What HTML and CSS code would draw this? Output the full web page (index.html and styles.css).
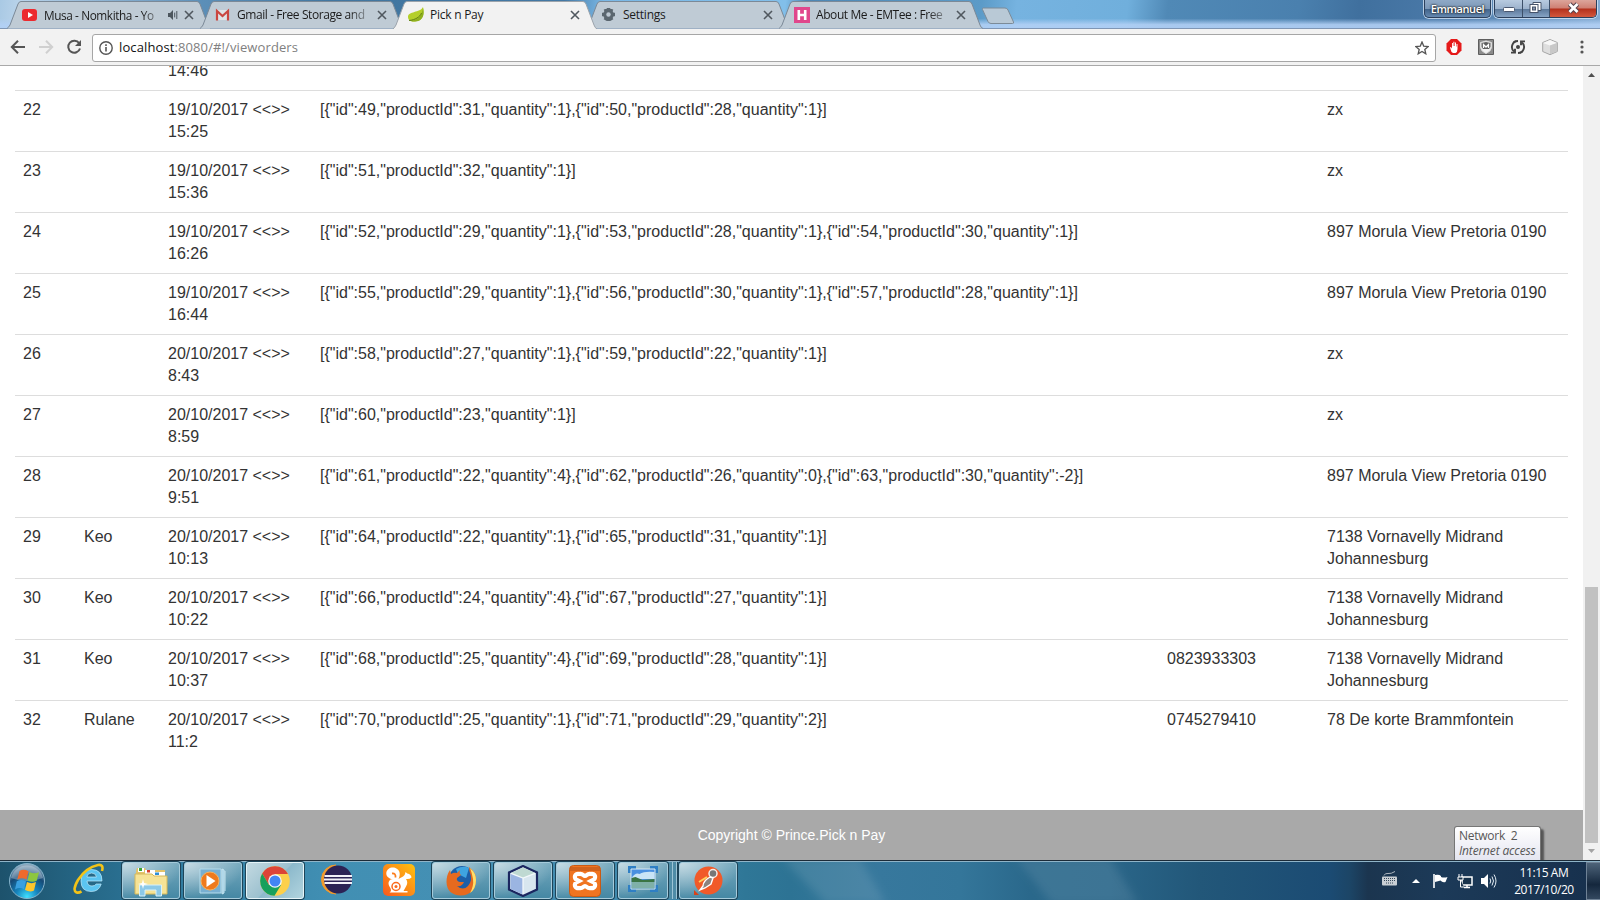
FILE: index.html
```html
<!DOCTYPE html>
<html lang="en">
<head>
<meta charset="utf-8">
<title>Pick n Pay</title>
<link rel="stylesheet" href="styles.css">
</head>
<body>
<div class="screen">
  <header class="strip">
    <div class="tabs">
      <div class="tab">
        <svg class="shape" viewBox="0 0 204 29"><path d="M0 28.5Q2 27 3 25L11 4Q12 1.5 14 1.5H190Q192 1.5 193 4L201 25Q202 28 204 28.5"/></svg>
        <svg class="fav" viewBox="0 0 16 16"><rect x="0" y="2" width="15" height="12" rx="3" fill="#ec2a2f"/><path d="M6 5v6l5-3z" fill="#fff"/></svg>
        <span class="label fade">Musa - Nomkitha - Yo</span>
        <svg class="spk" viewBox="0 0 12 12"><path d="M1 4h2l3-3v10L3 8H1z" fill="#4c565e"/><path d="M7.7 3.6v4.8M9.8 2v8" stroke="#4c565e" fill="none"/></svg>
        <svg class="x" viewBox="0 0 10 10"><path d="M1 1l8 8M9 1L1 9"/></svg>
      </div>
      <div class="tab">
        <svg class="shape" viewBox="0 0 204 29"><path d="M0 28.5Q2 27 3 25L11 4Q12 1.5 14 1.5H190Q192 1.5 193 4L201 25Q202 28 204 28.5"/></svg>
        <svg class="fav" viewBox="0 0 16 16"><path d="M1 3h13v10H1z" fill="#dfe3e6"/><path d="M2 13.500V4l5.500 5L13 4v9.500" fill="none" stroke="#ca4640" stroke-width="2.200"/></svg>
        <span class="label fade tight">Gmail - Free Storage and</span>
        <svg class="x" viewBox="0 0 10 10"><path d="M1 1l8 8M9 1L1 9"/></svg>
      </div>
      <div class="tab active">
        <svg class="shape" viewBox="0 0 204 29"><path d="M0 29Q2 27 3 25L11 4Q12 1.500 14 1.500H190Q192 1.500 193 4L201 25Q202 28 204 29"/></svg>
        <svg class="fav" viewBox="0 0 16 16"><path d="M15 0c1.500 6 .8 14-8 14.500-4 .3-7-1-7-4.500C0 4 12 6 15 0z" fill="#b4cf2a"/><path d="M15 1c1.500 6 .5 13-8 13.500-2.500.2-4-.3-5-1.200C9 14 14 9 15 1z" fill="#8fb01f"/><path d="M1 13.500C7 13 12 10 13.500 6" stroke="#5f7f12" fill="none"/></svg>
        <span class="label">Pick n Pay</span>
        <svg class="x" viewBox="0 0 10 10"><path d="M1 1l8 8M9 1L1 9"/></svg>
      </div>
      <div class="tab">
        <svg class="shape" viewBox="0 0 204 29"><path d="M0 28.5Q2 27 3 25L11 4Q12 1.5 14 1.5H190Q192 1.5 193 4L201 25Q202 28 204 28.5"/></svg>
        <svg class="fav" viewBox="0 0 16 16"><g stroke="#5b6770" stroke-width="3.600"><path d="M7.500 1v13M1 7.500h13M4.200 1.900l6.600 11.200M10.800 1.900L4.200 13.100"/></g><circle cx="7.500" cy="7.500" r="5.300" fill="#5b6770"/><circle cx="7.500" cy="7.500" r="2.200" fill="#bcc8d2"/></svg>
        <span class="label">Settings</span>
        <svg class="x" viewBox="0 0 10 10"><path d="M1 1l8 8M9 1L1 9"/></svg>
      </div>
      <div class="tab">
        <svg class="shape" viewBox="0 0 204 29"><path d="M0 28.5Q2 27 3 25L11 4Q12 1.5 14 1.5H190Q192 1.5 193 4L201 25Q202 28 204 28.5"/></svg>
        <svg class="fav" viewBox="0 0 16 16"><path d="M0 0h16v16H0z" fill="#e0478c"/><path d="M4.800 3v10M11.200 3v10M5 8h6" stroke="#fff" stroke-width="2.600"/></svg>
        <span class="label fade tight">About Me - EMTee : Free</span>
        <svg class="x" viewBox="0 0 10 10"><path d="M1 1l8 8M9 1L1 9"/></svg>
      </div>
      <svg class="newtab" viewBox="0 0 34 18"><path d="M2.500 1H24q2 0 3 2l5.500 12q.5 1.500-1 1.500H10q-2 0-3-2L1.500 2.500Q1 1 2.500 1z" fill="#b9c9d6" stroke="#7c8b98"/></svg>
    </div>
    <div class="winbtns">
      <div class="user">Emmanuel</div>
      <div class="ctl">
        <span class="c min"><svg width="12" height="6" viewBox="0 0 12 6"><rect x=".5" y=".5" width="11" height="4" rx="1" fill="#fff" stroke="#4a5870"/></svg></span>
        <span class="c max"><svg width="13" height="13" viewBox="0 0 13 13"><path d="M4 1.500h8v8H4z" fill="#fff" stroke="#46546b"/><rect x="1" y="3.500" width="8" height="8" fill="#fff" stroke="#46546b"/><rect x="3.500" y="6" width="3" height="3" fill="#8796ae" stroke="#46546b"/></svg></span>
        <span class="c close"><svg width="13" height="12" viewBox="0 0 13 12"><path d="M2.500 2l8 8M10.500 2l-8 8" stroke="#54424c" stroke-width="4.600"/><path d="M2.500 2l8 8M10.500 2l-8 8" stroke="#fff" stroke-width="2.700"/></svg></span>
      </div>
    </div>
  </header>

  <div class="toolbar">
    <svg class="nav" viewBox="0 0 16 16"><path d="M15 8H2M8 1.700L1.800 8 8 14.300" stroke="#555"/></svg>
    <svg class="nav" viewBox="0 0 16 16"><path d="M1 8h13M8 1.700L14.200 8 8 14.300" stroke="#d0d0d0"/></svg>
    <svg class="nav" viewBox="0 0 16 16"><path d="M13.200 4.300A6 6 0 1 0 14 9.500" stroke="#555"/><path d="M15 1v6H9z" fill="#555"/></svg>
    <div class="omni">
      <svg width="14" height="14" viewBox="0 0 14 14"><circle cx="7" cy="7" r="6.200" fill="none" stroke="#555" stroke-width="1.400"/><path d="M7 6v4.500M7 3.300v1.600" stroke="#555" stroke-width="1.600"/></svg>
      <span class="url">localhost<span class="path">:8080/#!/vieworders</span></span>
      <svg class="star" width="14" height="14" viewBox="0 0 14 14"><path d="M7 1l1.700 4.100 4.500.4-3.400 2.900 1 4.400L7 10.500l-3.800 2.300 1-4.400L.8 5.500l4.500-.4z" fill="none" stroke="#555" stroke-width="1.300"/></svg>
    </div>
    <div class="exts">
      <svg width="16" height="16" viewBox="0 0 16 16"><path d="M5 0h6l4.500 4.500v7L11 16H5L.5 11.500v-7z" fill="#e51a1a"/><path d="M5.500 13L4 8.500l.9-.5 1.100 1.400V4h.9v3h.5V2.700h1V7H9V3.500h1v4h.5V5h1v5q0 3-2 4H7z" fill="#fff"/></svg>
      <svg width="16" height="16" viewBox="0 0 16 16"><path d="M.5.500h15v15H.5z" fill="#8b8b8b" stroke="#5e5e5e"/><path d="M8 2l5.500 1.500V8q0 4-5.500 6.500Q2.500 12 2.500 8V3.500z" fill="#f2f2f2" stroke="#ddd"/><path d="M3.500 4L8 3l4.500 1v4l-1.500 2H5L3.500 8z" fill="#5f5f5f"/><path d="M5.500 9V5.500L8 8l2.500-2.500V9" fill="none" stroke="#fff" stroke-width="1.300"/></svg>
      <svg width="16" height="16" viewBox="0 0 16 16"><g fill="none" stroke="#444" stroke-width="1.900"><path d="M8 2A6 6 0 0 0 4 12.500M8 14A6 6 0 0 0 12 3.500"/><path d="M1 13.600h4V9.800M15 2.400h-4v3.800M3.500 3.500l2.500-1.500M12.500 12.500L10 14"/></g><circle cx="8" cy="8" r="2" fill="#444"/></svg>
      <svg width="16" height="16" viewBox="0 0 16 16"><path d="M8 .5l7.300 3v9L8 15.700.7 12.500v-9z" fill="#dedede" stroke="#a6a6a6"/><path d="M1 4l7 2.500L15 4 8 1z" fill="#f7f7f7"/><path d="M8 6.500v8.700l7-3V4z" fill="#c8c8c8"/></svg>
      <svg width="16" height="16" viewBox="0 0 16 16"><g fill="#555"><circle cx="8" cy="3" r="1.600"/><circle cx="8" cy="8" r="1.600"/><circle cx="8" cy="13" r="1.600"/></g></svg>
    </div>
  </div>

  <main class="view">
    <div class="page">
      <div class="tablewrap">
        <table class="orders">
          <colgroup><col class="c1"><col class="c2"><col class="c3"><col class="c4"><col class="c5"><col class="c6"></colgroup>
          <tbody>
            <tr class="cut"><td></td><td></td><td><div class="lift">14:46</div></td><td></td><td></td><td></td></tr>
            <tr><td>22</td><td></td><td>19/10/2017 &lt;&lt;&gt;&gt;<br>15:25</td><td>[{"id":49,"productId":31,"quantity":1},{"id":50,"productId":28,"quantity":1}]</td><td></td><td>zx</td></tr>
            <tr><td>23</td><td></td><td>19/10/2017 &lt;&lt;&gt;&gt;<br>15:36</td><td>[{"id":51,"productId":32,"quantity":1}]</td><td></td><td>zx</td></tr>
            <tr><td>24</td><td></td><td>19/10/2017 &lt;&lt;&gt;&gt;<br>16:26</td><td>[{"id":52,"productId":29,"quantity":1},{"id":53,"productId":28,"quantity":1},{"id":54,"productId":30,"quantity":1}]</td><td></td><td>897 Morula View Pretoria 0190</td></tr>
            <tr><td>25</td><td></td><td>19/10/2017 &lt;&lt;&gt;&gt;<br>16:44</td><td>[{"id":55,"productId":29,"quantity":1},{"id":56,"productId":30,"quantity":1},{"id":57,"productId":28,"quantity":1}]</td><td></td><td>897 Morula View Pretoria 0190</td></tr>
            <tr><td>26</td><td></td><td>20/10/2017 &lt;&lt;&gt;&gt;<br>8:43</td><td>[{"id":58,"productId":27,"quantity":1},{"id":59,"productId":22,"quantity":1}]</td><td></td><td>zx</td></tr>
            <tr><td>27</td><td></td><td>20/10/2017 &lt;&lt;&gt;&gt;<br>8:59</td><td>[{"id":60,"productId":23,"quantity":1}]</td><td></td><td>zx</td></tr>
            <tr><td>28</td><td></td><td>20/10/2017 &lt;&lt;&gt;&gt;<br>9:51</td><td>[{"id":61,"productId":22,"quantity":4},{"id":62,"productId":26,"quantity":0},{"id":63,"productId":30,"quantity":-2}]</td><td></td><td>897 Morula View Pretoria 0190</td></tr>
            <tr><td>29</td><td>Keo</td><td>20/10/2017 &lt;&lt;&gt;&gt;<br>10:13</td><td>[{"id":64,"productId":22,"quantity":1},{"id":65,"productId":31,"quantity":1}]</td><td></td><td>7138 Vornavelly Midrand<br>Johannesburg</td></tr>
            <tr><td>30</td><td>Keo</td><td>20/10/2017 &lt;&lt;&gt;&gt;<br>10:22</td><td>[{"id":66,"productId":24,"quantity":4},{"id":67,"productId":27,"quantity":1}]</td><td></td><td>7138 Vornavelly Midrand<br>Johannesburg</td></tr>
            <tr><td>31</td><td>Keo</td><td>20/10/2017 &lt;&lt;&gt;&gt;<br>10:37</td><td>[{"id":68,"productId":25,"quantity":4},{"id":69,"productId":28,"quantity":1}]</td><td>0823933303</td><td>7138 Vornavelly Midrand<br>Johannesburg</td></tr>
            <tr><td>32</td><td>Rulane</td><td>20/10/2017 &lt;&lt;&gt;&gt;<br>11:2</td><td>[{"id":70,"productId":25,"quantity":1},{"id":71,"productId":29,"quantity":2}]</td><td>0745279410</td><td>78 De korte Brammfontein</td></tr>
          </tbody>
        </table>
      </div>
      <footer class="foot">Copyright © Prince.Pick n Pay</footer>
    </div>
    <div class="scroll">
      <svg width="17" height="17" viewBox="0 0 17 17"><path d="M5 11h7L8.500 7z" fill="#505050"/></svg>
      <div class="thumb"></div>
      <svg width="17" height="17" viewBox="0 0 17 17"><path d="M5 6h7l-3.500 4z" fill="#a3a3a3"/></svg>
    </div>
  </main>

  <div class="tip"><div>Network&nbsp; 2</div><div class="it">Internet access</div></div>

  <footer class="taskbar">
    <svg class="gloss" viewBox="0 0 1600 38" preserveAspectRatio="none"><defs><filter id="soft"><feGaussianBlur stdDeviation="4"/></filter></defs><g filter="url(#soft)" fill="#fff"><path d="M782 -4h78l26 46h-60z" opacity=".1"/><path d="M1016 -4h94l28 46h-86z" opacity=".09"/></g></svg>
    <div class="apps">
      <div class="start"><svg width="40" height="38" viewBox="0 0 40 38"><defs><radialGradient id="orb" cx=".5" cy=".95" r=".9"><stop offset="0" stop-color="#3fe0ff"/><stop offset=".35" stop-color="#1684bd"/><stop offset=".7" stop-color="#164a76"/><stop offset="1" stop-color="#8ba7bd"/></radialGradient></defs><circle cx="19" cy="19" r="17.500" fill="url(#orb)" stroke="#86b4cc"/><path d="M3 16a16.500 16.500 0 0 1 32 0Q19 22 3 16z" fill="#fff" opacity=".28"/><path d="M11.500 9q4-2.500 9 .2l-2 8.300q-4.500-2.500-9.200 0z" fill="#ef6a2c"/><path d="M21.500 10q4.500 2.500 9.500.2l-2.300 8.500q-4.500 2-9.200-.3z" fill="#8dc63f"/><path d="M8.800 19.200q4.500-2.500 9.200 0l-2 8q-4.500-2.300-9 .3z" fill="#39a0e0"/><path d="M19 20q4.500 2.300 9 0L26 28.500q-4 2-9-.5z" fill="#fdc62d"/></svg></div>
      <div class="ie"><svg width="32" height="32" viewBox="0 0 32 32"><path d="M29 18H14q.5 5 5 5 3 0 4.200-2h5q-2.200 7.500-10 7.500-10.200 0-10.200-10.500Q8 6.500 18.500 6.500q10.500 0 10.500 11.500zM23.500 14q-.6-4-4.900-4t-4.700 4z" fill="#5bc4f1" stroke="#c2ecfd" stroke-width=".7"/><path d="M29 8Q31 1 25 2 13 4.500 5 17-1 27.500 3.500 29.500q2.500.5 5-1.200" fill="none" stroke="#f3c318" stroke-width="2.600"/></svg></div>
      <div class="btn"><svg width="34" height="32" viewBox="0 0 34 32"><path d="M2 6l1-3h8l1 2h19v23H2z" fill="#e3c36a"/><path d="M4 3h6v4H4z" fill="#fff"/><path d="M5 3h3v3H5z" fill="#3aa535"/><path d="M11 5h10v5H11z" fill="#fff"/><path d="M13 5h3v2.500h-3z" fill="#d8402c"/><path d="M20 7h11v5H20z" fill="#fff"/><path d="M21 7.500h4V10h-4z" fill="#2e8fd8"/><path d="M1 9h17l2 2h13v18H1z" fill="#f6e396" stroke="#d4b85b"/><path d="M5.500 31V20h22v11h-5.500v-6H11v6z" fill="#8cc9e8" stroke="#d7f1fb"/><path d="M9 14l1 4 4 1-4 1-1 4-1-4-4-1 4-1z" fill="#fff"/></svg></div>
      <div class="btn"><svg width="30" height="28" viewBox="0 0 30 28"><path d="M2 2h21v24H2z" fill="#78afd1" stroke="#b4dcec"/><path d="M24 2l2 1v23l-2 1zM27 4v20" fill="#9dcbe2" stroke="#c5e5f1"/><circle cx="12" cy="14" r="9" fill="#ef7a1d" stroke="#f9b15a"/><path d="M8.500 8v12l9-6z" fill="#fff"/></svg></div>
      <div class="btn on"><svg width="30" height="30" viewBox="0 0 30 30"><circle cx="15" cy="15" r="14.800" fill="#fdd04b"/><path d="M2.200 7.500A14.800 14.800 0 0 1 27.900 8H15L9 19z" fill="#dc4437"/><path d="M2.200 7.500A14.800 14.800 0 0 0 14.500 29.800L21 19l-12 0z" fill="#17a05d"/><circle cx="15" cy="15" r="6.800" fill="#f4f7f8"/><circle cx="15" cy="15" r="5.500" fill="#4285f4"/></svg></div>
      <div class="plain"><svg width="34" height="32" viewBox="0 0 34 32"><path d="M16 1A14.500 14.500 0 0 0 16 30Q6 24 6 15.500T16 1z" fill="#f29a2c" stroke="#f29a2c"/><circle cx="18" cy="15.500" r="14" fill="#2c2255"/><path d="M4.500 12h27.500M4 15.500h28M4.500 19h27.500" stroke="#f2f0f8" stroke-width="1.800"/></svg></div>
      <div class="plain"><svg width="32" height="32" viewBox="0 0 32 32"><defs><linearGradient id="uc" x1="1" x2="0" y2="1"><stop stop-color="#ffc20f"/><stop offset="1" stop-color="#f9591e"/></linearGradient></defs><rect width="32" height="32" rx="5" fill="url(#uc)"/><path d="M6.500 28.500C9 27 8 25 6.500 22.500 4 18 7 14.500 10.500 15 6 15.500 3 12 3.300 9 3.800 4.500 8.500 2.500 12.500 4c5 2 5 7 3 11 2-1.500 5.500-2 6.500-5l.5-2 1.800 1.500q4 .8 4.200 4-2 2-5.500 1.500 2.500 3.500 0 7.500l-2.500 4.500h4v1.500z" fill="#fff"/><path d="M9 9.500q4-.5 3.500 4" fill="none" stroke="#fb7d1b" stroke-width="1.800"/><circle cx="13" cy="22.500" r="4" fill="none" stroke="#fa6a1d" stroke-width="1.500"/><circle cx="13" cy="22.500" r="1.500" fill="#fa6a1d"/></svg></div>
      <div class="btn"><svg width="32" height="32" viewBox="0 0 32 32"><circle cx="17" cy="14" r="13" fill="#1d5fa8"/><path d="M11 4q7-4 13-1l-3 10-8-4z" fill="#3fa4e0"/><path d="M24 2q8 6 7 15-2 13-15 13.500Q2 30 1.500 17 1.500 10 5 5l1 4q3-2 6-1l3-3q-1 4 1 5l-4 3q-1 3 3 4l4 0q-2 5-7 4 6 5 11 0 5-6 2-13-1-3-1-6z" fill="#e66a1f"/><path d="M25 3q6 5 6 12 0 9-6 13 4-7 3-14-1-6-3-11z" fill="#fde06a"/></svg></div>
      <div class="btn"><svg width="32" height="32" viewBox="0 0 32 32"><path d="M16 1l14 6.500v17L16 31 2 24.500v-17z" fill="#d8e6ef" stroke="#1b2660" stroke-width="2.200"/><path d="M3.500 8.300L16 13v16.500L3.500 24z" fill="#9bb5e2"/><path d="M4 8l12-5.500L28 8l-12 5z" fill="#bfd9d2"/><path d="M4 8.300L16 13l12-4.700M16 13v16" stroke="#f3f8fa" stroke-width="1.300" fill="none"/></svg></div>
      <div class="btn"><svg width="32" height="32" viewBox="0 0 32 32"><rect x=".5" y=".5" width="31" height="31" rx="4" fill="#f07420" stroke="#c85a15"/><path d="M1 2h30v4H1z" fill="#bd561a" opacity=".6"/><path d="M10 9a3 3 0 0 0-2 6l2 1-2 1a3 3 0 0 0 2 6c4 1 4-2 6-2s2 3 6 2a3 3 0 0 0 2-6l-2-1 2-1a3 3 0 0 0-2-6c-4-1-4 2-6 2s-2-3-6-2z" fill="none" stroke="#fff" stroke-width="4.200"/></svg></div>
      <div class="btn photo"><svg width="30" height="26" viewBox="0 0 30 26"><path d="M1.500 7V1.500H8M22 1.500h6.500V7M28.500 19v5.500H22M8 24.500H1.500V19" fill="none" stroke="#2f7fc4" stroke-width="3"/><path d="M3 3h24v20H3z" fill="#4a90e0" stroke="#dcebf3"/><path d="M3.500 12q4-6 8-4 5-3 15-2v7h-23z" fill="#c9e4f6"/><path d="M3.500 12l4-1 7 3 12-1v3h-23z" fill="#3a7444"/><path d="M3.500 16h23v6.500h-23z" fill="#7fb0a8"/></svg></div>
      <div class="stack"><i></i><i></i></div>
      <div class="btn"><svg width="30" height="30" viewBox="0 0 30 30"><circle cx="15.500" cy="14.500" r="14" fill="#f15a29"/><path d="M1 24v5h5z" fill="#d94318"/><circle cx="20" cy="7.500" r="4" fill="#777" stroke="#f4eeea" stroke-width="1.500"/><path d="M17 11q-7 4-7 9l-3 4 5-2 6-4 2-6z" fill="#8b8480" stroke="#fff" stroke-width="1.400"/><path d="M14 11l-8 5" stroke="#ffd15c" stroke-width="2"/></svg></div>
    </div>
    <div class="tray">
      <svg class="kb" width="17" height="16" viewBox="0 0 17 16"><path d="M3 4.500q1-2.500 4-2t7-2" fill="none" stroke="#aeb7bf"/><rect x="1" y="5.500" width="15" height="9" rx="1" fill="#c9cfd4"/><path d="M3 7.500h11M3 9.500h11M5 12h7" stroke="#34485a" stroke-dasharray="1 1"/></svg>
      <svg class="up" width="8" height="5" viewBox="0 0 8 5"><path d="M4 0l4 4H0z" fill="#fff"/></svg>
      <svg class="fl" width="17" height="16" viewBox="0 0 17 16"><path d="M2 1v14" stroke="#fff" stroke-width="1.600"/><path d="M3 2q4-1 6 1v1q3 1 6.500 0L13.500 9q-3 1-5-1.500Q6 8 3 9z" fill="#fff"/></svg>
      <svg class="nt" width="17" height="16" viewBox="0 0 17 16"><path d="M5 4h10v8H5z" fill="#17324b" stroke="#fff" stroke-width="1.500"/><path d="M7 14.500h6M10 12v2" stroke="#fff" stroke-width="1.500"/><path d="M2 1v3M5 1v3M1 4h5v3H1zM3.500 7v7H7" fill="#17324b" stroke="#fff"/></svg>
      <svg class="sp" width="17" height="16" viewBox="0 0 17 16"><path d="M1 5h3l4-4v14l-4-4H1z" fill="#fff"/><path d="M10 5.500q1.500 2.500 0 5M12 3.500q3 4.500 0 9M14 1.500q4 6.500 0 13" fill="none" stroke="#e4edf4"/></svg>
      <div class="clock">11:15 AM<br>2017/10/20</div>
      <div class="desk"></div>
    </div>
  </footer>
</div>
</body>
</html>
```

FILE: styles.css
```css
* { box-sizing: border-box; }
body { margin: 0; background: #fff; }
svg { display: block; flex: none; }
.screen { position: relative; width: 1600px; height: 900px; overflow: hidden; display: flex; flex-direction: column; font-family: "Open Sans", "Noto Sans", sans-serif; }

/* title strip */
.strip { height: 29px; flex: none; display: flex; justify-content: space-between; border-bottom: 1px solid #7f96b5;
  background: linear-gradient(180deg, rgba(178,208,245,0) 66%, rgba(178,208,245,.9) 88%), linear-gradient(97deg, #a9c9e4 0, #b9d3ea 20px, #5c8fb8 200px, #4176a0 330px, #4378a4 560px, #7ab8e6 600px, #82bfea 780px, #4d87b4 800px, #5c9bc8 975px, #76b3e0 1010px, #70afdc 1120px, #5089b6 1160px, #4a80ae 1290px, #40709e 1350px, #4b7aa9 1440px, #88afd6 1600px); }
.tabs { display: flex; padding-left: 7px; height: 29px; }
.tab { position: relative; width: 204px; margin-right: -11px; height: 29px; display: flex; align-items: center; padding: 1px 17px 0 15px; flex: none; }
.shape { position: absolute; inset: 0; width: 204px; height: 29px; }
.shape path { fill: #bfcbd5; stroke: #7b8997; }
.active { z-index: 2; }
.active .shape path { fill: #f2f2f2; stroke: #9ba3ab; }
.fav, .label, .spk, .x { position: relative; }
.fav { width: 16px; height: 16px; }
.label { margin-left: 6px; font-size: 12px; letter-spacing: -.25px; color: #1b1b1b; white-space: nowrap; flex: 1; min-width: 0; line-height: 18px; }
.tight { letter-spacing: -.42px; }
.tab:first-child .label { font-size: 11.8px; letter-spacing: -.4px; }
.fade { -webkit-mask-image: linear-gradient(90deg, #000 84%, rgba(0,0,0,.2)); mask-image: linear-gradient(90deg, #000 84%, rgba(0,0,0,.2)); }
.spk { width: 12px; height: 12px; margin: 0 5px 0 6px; }
.x { width: 10px; height: 10px; margin: 0 0 0 7px; }
.spk + .x { margin-left: 0; }
.x path { stroke: #50585f; stroke-width: 1.6; }
.newtab { width: 34px; height: 18px; margin: 7px 0 0 9px; }
.winbtns { display: flex; gap: 3px; margin-right: 3px; align-items: flex-start; }
.user, .ctl { height: 18px; border: 1px solid #2c405c; border-top: 0; border-radius: 0 0 5px 5px; box-shadow: 0 0 0 1px rgba(220,234,248,.75); }
.user { width: 67px; background: linear-gradient(#8fa9c6 0, #7c98b8 50%, #3f6289 52%, #6689b0); color: #fff; font-size: 11px; line-height: 17px; text-align: center; text-shadow: 0 0 2px #222, 0 0 2px #222; letter-spacing: -.45px; font-weight: 600; }
.ctl { width: 103px; display: flex; overflow: hidden; }
.c { display: flex; align-items: center; justify-content: center; border-right: 1px solid #3c5069; background: linear-gradient(#b8cbe0 0, #9db3cd 50%, #5a7799 52%, #86a3c4); }
.min { width: 28px; padding-top: 3px; }
.max { width: 27px; padding: 0 2px 2px 0; }
.close { flex: 1; border: 0; background: linear-gradient(#dca59b 0, #cf7f72 48%, #b3301c 52%, #d3583d); padding-bottom: 2px; }

/* toolbar */
.toolbar { height: 37px; flex: none; background: #f2f2f2; border-bottom: 1px solid #a9a9a9; display: flex; align-items: center; padding-left: 10px; }
.nav { width: 16px; height: 16px; margin-right: 12px; }
.nav path[stroke] { fill: none; stroke-width: 2; }
.omni { width: 1344px; height: 28px; margin-left: -2px; margin-top: 1px; background: #fff; border: 1px solid #a6a6a6; border-radius: 3px; display: flex; align-items: center; padding: 0 6px; }
.url { font-size: 13px; letter-spacing: .11px; margin: -2px 0 0 6px; color: #111; line-height: 20px; }
.path { color: #808080; }
.star { margin-left: auto; }
.exts { display: flex; gap: 16px; margin: 0 0 0 10px; }

/* viewport */
.view { flex: 1; display: flex; min-height: 0; background: #fff; }
.page { width: 1583px; display: flex; flex-direction: column; overflow: hidden; font-family: "Liberation Sans", Arial, sans-serif; }
.tablewrap { height: 744px; flex: none; padding: 0 15px; }
.orders { width: 1553px; table-layout: fixed; border-collapse: separate; border-spacing: 0; font-size: 16px; line-height: 22px; color: #333; }
.c1 { width: 61px; } .c2 { width: 84px; } .c3 { width: 152px; } .c4 { width: 847px; } .c5 { width: 160px; } .c6 { width: 249px; }
.orders td { padding: 8px; border-top: 1px solid #ddd; vertical-align: top; white-space: nowrap; height: 61px; }
.orders .cut td { border: 0; padding: 0 8px; height: 24px; }
.lift { margin-top: -6px; height: 22px; }
.foot { height: 50px; flex: none; background: #a9a9a9; color: #fff; font-size: 14px; line-height: 50px; text-align: center; }
.scroll { width: 17px; background: #f1f1f1; display: flex; flex-direction: column; align-items: center; justify-content: space-between; }
.thumb { width: 13px; height: 256px; margin-top: auto; background: #c1c1c1; }

.tip { position: absolute; left: 1454px; top: 826px; width: 87px; height: 35px; border: 1px solid #767676; border-bottom: 0; border-radius: 3px 3px 0 0; background: linear-gradient(#fff, #e4e5f0); box-shadow: 3px 3px 2px rgba(0,0,0,.5); padding: 1px 0 0 4px; font-size: 12px; line-height: 15px; color: #575757; white-space: nowrap; letter-spacing: -.25px; }
.it { font-style: italic; letter-spacing: -.15px; }

/* taskbar */
.taskbar { position: relative; height: 40px; flex: none; display: flex; justify-content: space-between; border-top: 1px solid #1c2b38; box-shadow: inset 0 1px #8fb4c8;
  background: linear-gradient(90deg, #1d526c 0, #276a8a 100px, #3380a5 200px, #418fb3 330px, #4590b4 480px, #3f88ab 660px, #2f7797 745px, #2d7394 790px, #37789d 880px, #34769a 960px, #2a688b 1030px, #2a6689 1110px, #225779 1200px, #1b4b73 1330px, #1c4566 1350px, #1b354f 1368px, #1c3a58 1440px, #17304d 1600px); }
.gloss { position: absolute; left: 0; top: 1px; width: 1600px; height: 38px; }
.apps { position: relative; display: flex; padding-top: 1px; }
.start { width: 72px; padding-left: 8px; }
.ie { width: 50px; padding: 1px 0 0 1px; }
.btn { width: 58px; height: 37px; margin-right: 4px; border: 1px solid #a6cbdb; border-radius: 3px; box-shadow: 0 0 0 1px #1d4458; background: radial-gradient(ellipse at 0 0, rgba(255,255,255,.6), transparent 75%), linear-gradient(#74a8bd, #4588a4); display: flex; align-items: center; justify-content: center; }
.on { border-color: #e6f4f8; background: linear-gradient(135deg, #c3d9e1 0, #9cc1cf 50%, #8cb9cb 51%, #b1d4df); }
.plain { width: 62px; display: flex; justify-content: center; padding-top: 2px; }
.btn.on + .plain { margin-left: -2px; }
.plain + .btn { margin-left: 2px; }
.photo { width: 50px; margin-right: 1px; padding-bottom: 3px; }
.stack { display: flex; width: 10px; }
.stack i { width: 4px; height: 37px; border-right: 1px solid #9cc4d5; background: #4f8ca6; box-shadow: 1px 0 #1d4458; }
.tray { position: relative; display: flex; align-items: flex-start; padding-top: 1px; color: #fff; }
.kb { margin: 9px 14px 0 0; }
.up { margin: 17px 12px 0 0; }
.fl { margin: 11px 8px 0 0; }
.nt { margin: 11px 6px 0 0; }
.sp { margin: 11px 0 0 0; }
.clock { width: 89px; text-align: center; font-size: 12px; line-height: 17px; padding: 2px 0 0 5px; letter-spacing: -.4px; }
.desk { width: 14px; height: 38px; border: 1px solid #6f8296; border-right: 0; background: linear-gradient(#4d6379, #14273d 60%, #33485f); }
```
